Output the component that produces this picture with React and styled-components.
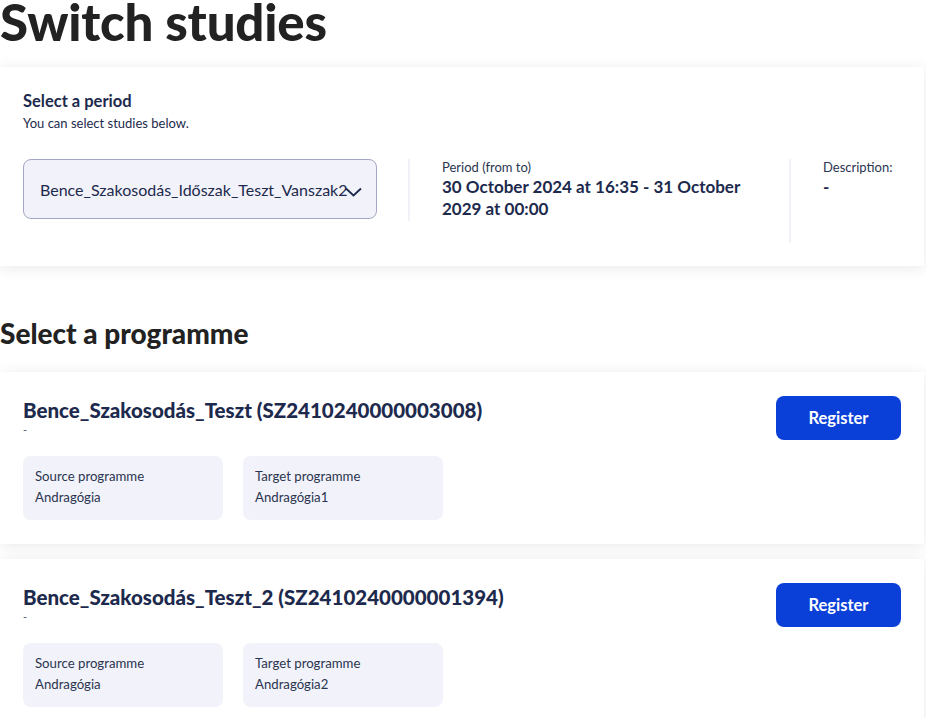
import styled, { createGlobalStyle } from "styled-components";

const GlobalStyle = createGlobalStyle`
    body {
        margin: 0;
        background: #ffffff;
        font-family: "Lato", "Liberation Sans", sans-serif;
        color: #1d2a4d;
    }
`;

const Page = styled.div`
    width: 924px;
    padding-bottom: 40px;
`;

const PageTitle = styled.h1`
    margin: 0;
    font-size: 51px;
    line-height: 44px;
    font-weight: 900;
    color: #222222;
    letter-spacing: -0.2px;
`;

const SectionTitle = styled.h2`
    margin: 0;
    padding: 51px 0 23px;
    font-size: 28px;
    line-height: 32px;
    font-weight: 900;
    color: #222222;
`;

const Card = styled.section`
    background: #ffffff;
    box-shadow: 0 2px 14px rgba(0, 0, 0, 0.09);
    padding: ${(p) => p.$pad || "24px 23px"};
    margin-top: ${(p) => p.$top || "0"};
`;

const CardLabel = styled.h3`
    margin: 0;
    font-size: 16.5px;
    line-height: 20px;
    font-weight: 700;
    color: #1d2a4d;
`;

const Hint = styled.p`
    margin: 4px 0 0;
    font-size: 13px;
    line-height: 16px;
    color: #1d2a4d;
`;

const PeriodRow = styled.div`
    display: flex;
    align-items: flex-start;
    margin-top: 28px;
`;

const SelectBox = styled.div`
    position: relative;
    width: 354px;
    height: 60px;
    box-sizing: border-box;
    background: #f1f2fa;
    border: 1px solid #a3a7c4;
    border-radius: 8px;
    display: flex;
    align-items: center;
    padding-left: 16px;
    font-size: 16px;
    color: #1d2a4d;
    overflow: hidden;
    white-space: nowrap;
`;

const Chevron = styled.svg`
    position: absolute;
    right: 14px;
    top: 27px;
`;

const Column = styled.div`
    border-left: 2px solid #f1f2f8;
    margin-left: ${(p) => p.$gap};
    padding-left: ${(p) => p.$pad};
    width: ${(p) => p.$width};
    min-height: ${(p) => p.$height};
`;

const InfoLabel = styled.div`
    font-size: 13px;
    line-height: 16px;
    color: #2c3550;
`;

const InfoValue = styled.div`
    margin-top: 1px;
    font-size: 17px;
    line-height: 22px;
    font-weight: 700;
    color: #1d2a4d;
`;

const ProgHead = styled.div`
    display: flex;
    justify-content: space-between;
    align-items: flex-start;
`;

const ProgTitle = styled.h3`
    margin: 0;
    padding-top: 1px;
    font-size: 20.5px;
    line-height: 26px;
    font-weight: 900;
    color: #1d2a4d;
`;

const Dash = styled.div`
    margin-top: 1px;
    font-size: 11px;
    line-height: 12px;
    color: #555b70;
`;

const RegisterButton = styled.button`
    width: 125px;
    height: 44px;
    border: none;
    border-radius: 8px;
    background: #0a40d8;
    color: #ffffff;
    font-family: "Lato", sans-serif;
    font-size: 16.5px;
    line-height: 44px;
    font-weight: 700;
    padding: 0;
    cursor: pointer;
`;

const InfoBoxes = styled.div`
    display: flex;
    gap: 20px;
    margin-top: 16px;
`;

const InfoBox = styled.div`
    width: 200px;
    height: 64px;
    box-sizing: border-box;
    background: #f1f2fa;
    border-radius: 8px;
    padding: 10px 12px;
    font-size: 13.2px;
    line-height: 21px;
    color: #2c3550;
`;

const programmes = [
    { name: "Bence_Szakosodás_Teszt (SZ2410240000003008)", target: "Andragógia1" },
    { name: "Bence_Szakosodás_Teszt_2 (SZ2410240000001394)", target: "Andragógia2" },
];

const App = () => {
    return (
        <Page>
            <GlobalStyle />
            <PageTitle>Switch studies</PageTitle>
            <Card $pad="24px 23px 23px" $top="23px">
                <CardLabel>Select a period</CardLabel>
                <Hint>You can select studies below.</Hint>
                <PeriodRow>
                    <SelectBox>
                        Bence_Szakosodás_Időszak_Teszt_Vanszak2
                        <Chevron width="17" height="10" viewBox="0 0 17 10">
                            <path d="M1 1.5 L8.5 8.5 L16 1.5" fill="none" stroke="#1d2a4d" strokeWidth="1.8" />
                        </Chevron>
                    </SelectBox>
                    <Column $gap="31px" $pad="32px" $width="315px" $height="62px">
                        <InfoLabel>Period (from to)</InfoLabel>
                        <InfoValue>30 October 2024 at 16:35 - 31 October 2029 at 00:00</InfoValue>
                    </Column>
                    <Column $gap="32px" $pad="32px" $width="70px" $height="84px">
                        <InfoLabel>Description:</InfoLabel>
                        <InfoValue>-</InfoValue>
                    </Column>
                </PeriodRow>
            </Card>
            <SectionTitle>Select a programme</SectionTitle>
            {programmes.map((p, i) => (
                <Card key={p.name} $pad="24px 23px 24px" $top={i ? "15px" : "0"}>
                    <ProgHead>
                        <div>
                            <ProgTitle>{p.name}</ProgTitle>
                            <Dash>-</Dash>
                        </div>
                        <RegisterButton>Register</RegisterButton>
                    </ProgHead>
                    <InfoBoxes>
                        <InfoBox>
                            Source programme
                            <br />
                            Andragógia
                        </InfoBox>
                        <InfoBox>
                            Target programme
                            <br />
                            {p.target}
                        </InfoBox>
                    </InfoBoxes>
                </Card>
            ))}
        </Page>
    );
};

export default App;
